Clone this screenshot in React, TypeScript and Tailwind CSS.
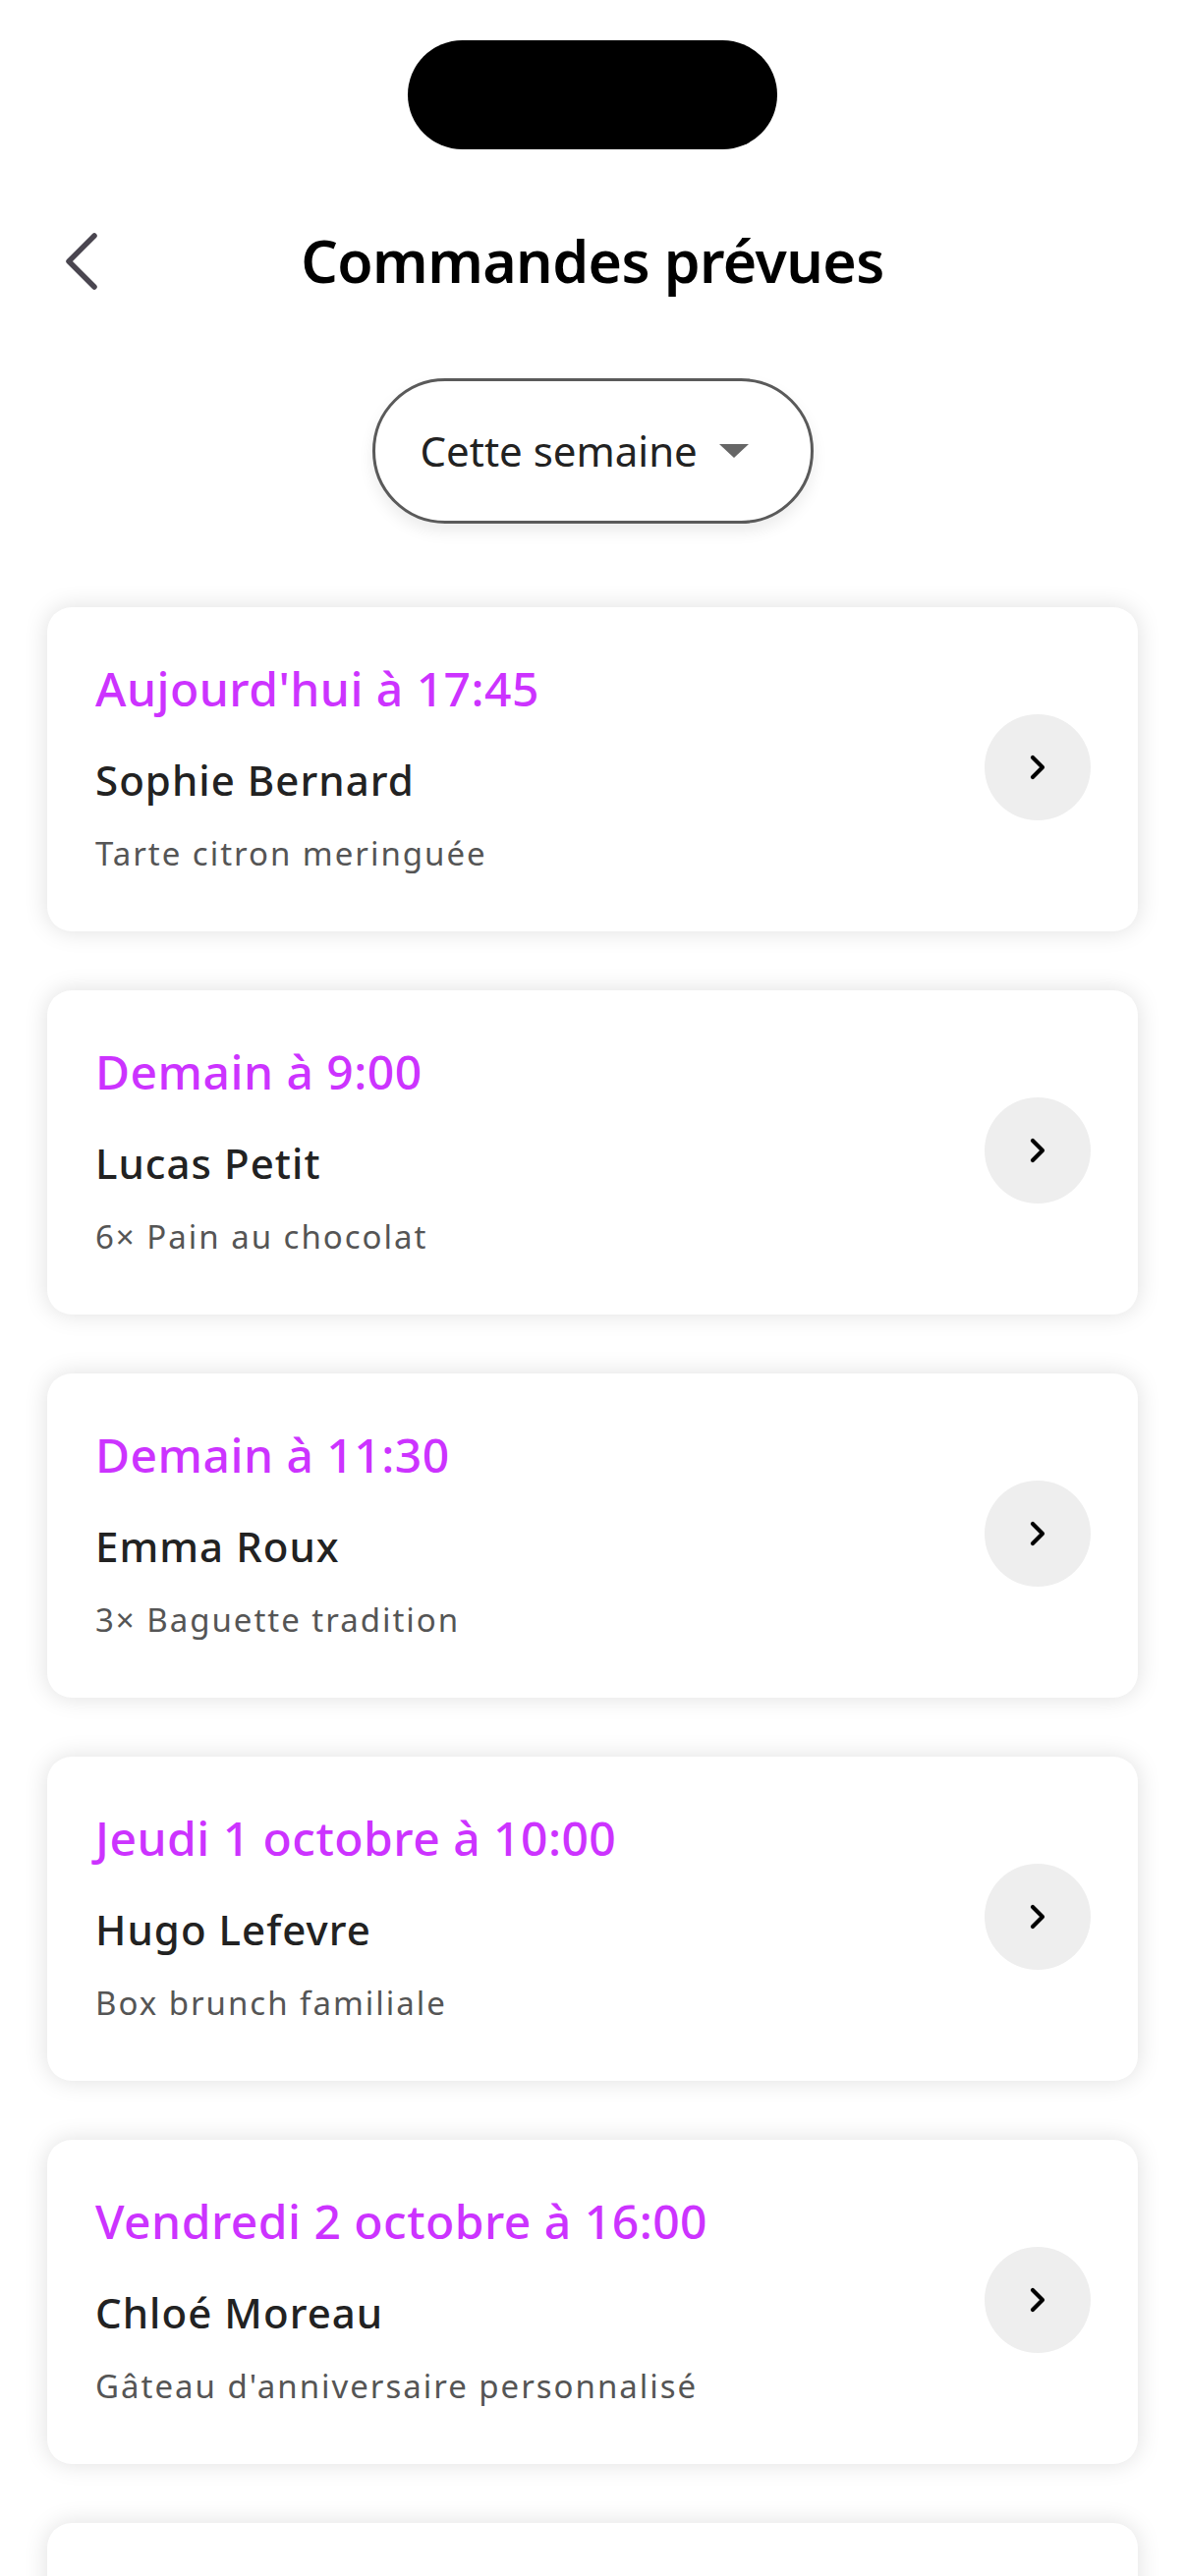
import React from "react";

type Order = { when: string; name: string; items: string };

const orders: Order[] = [
  { when: "Aujourd'hui à 17:45", name: "Sophie Bernard", items: "Tarte citron meringuée" },
  { when: "Demain à 9:00", name: "Lucas Petit", items: "6× Pain au chocolat" },
  { when: "Demain à 11:30", name: "Emma Roux", items: "3× Baguette tradition" },
  { when: "Jeudi 1 octobre à 10:00", name: "Hugo Lefevre", items: "Box brunch familiale" },
  { when: "Vendredi 2 octobre à 16:00", name: "Chloé Moreau", items: "Gâteau d'anniversaire personnalisé" },
];

function Chevron() {
  return (
    <div className="flex h-[108px] w-[108px] shrink-0 items-center justify-center rounded-full bg-[#eeeeee]">
      <svg width="16" height="26" viewBox="0 0 16 26" fill="none">
        <path d="M3 3 L13 13 L3 23" stroke="#000" strokeWidth="4.2" strokeLinecap="round" strokeLinejoin="round" />
      </svg>
    </div>
  );
}

function OrderCard({ o }: { o: Order }) {
  return (
    <div className="flex items-center justify-between rounded-[25px] bg-white pl-[49px] pr-[48px] pt-[55px] pb-[59px] shadow-[0_0_24px_rgba(0,0,0,0.13)]">
      <div className="flex flex-col">
        <div className="text-[48px] leading-[56px] font-medium tracking-[0.01em] text-[#cc33ff]">{o.when}</div>
        <div className="mt-[40px] text-[42px] leading-[50px] font-medium tracking-[0.025em] text-[#222222]">{o.name}</div>
        <div className="mt-[30px] text-[33px] leading-[40px] tracking-[0.06em] text-[#555555]">{o.items}</div>
      </div>
      <Chevron />
    </div>
  );
}

export default function App() {
  return (
    <div className="h-[2622px] w-[1206px] overflow-hidden bg-white font-['Noto_Sans',sans-serif]">
      <div className="mx-auto mt-[41px] h-[111px] w-[376px] rounded-full bg-black" />
      <div className="mt-[77px] grid h-[72px] grid-cols-[1fr_auto_1fr] items-center">
        <div className="flex items-center pl-[64px]">
          <svg width="38" height="60" viewBox="0 0 38 60" fill="none">
            <path d="M32 5 L6 31 L32 57" stroke="#4a4650" strokeWidth="5.5" strokeLinecap="round" strokeLinejoin="round" />
          </svg>
        </div>
        <div className="text-[59px] leading-[72px] font-semibold tracking-[-0.01em] text-black">Commandes prévues</div>
        <div />
      </div>
      <div className="mt-[84px] flex justify-center">
        <div className="flex h-[148px] w-[449px] items-center rounded-full border-[3px] border-[#5a5a5a] bg-white pl-[46px] shadow-[0_8px_16px_rgba(0,0,0,0.08)]">
          <span className="text-[42px] leading-[50px] text-[#222222]">Cette semaine</span>
          <svg className="ml-[22px]" width="30" height="14" viewBox="0 0 30 14">
            <path d="M0 0 L30 0 L15 14 Z" fill="#666666" />
          </svg>
        </div>
      </div>
      <div className="mt-[85px] flex flex-col gap-[60px] px-[48px]">
        {orders.map((o) => (
          <OrderCard key={o.when} o={o} />
        ))}
        <div className="h-[330px] rounded-[25px] bg-white shadow-[0_0_24px_rgba(0,0,0,0.13)]" />
      </div>
    </div>
  );
}
